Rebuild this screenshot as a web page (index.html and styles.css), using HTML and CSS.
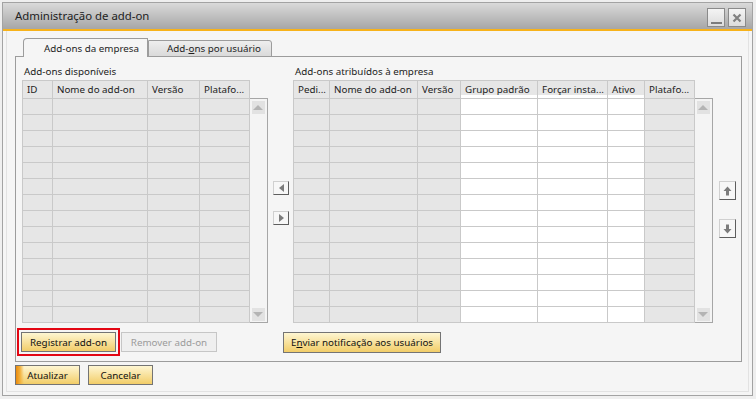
FILE: index.html
```html
<!DOCTYPE html>
<html lang="pt">
  <head>
    <meta charset="UTF-8" />
    <meta name="viewport" content="width=device-width, initial-scale=1.0" />
    <title>Administração de add-on</title>
    <link rel="stylesheet" href="styles.css">
  </head>
  <body>
    <div class="window">
      <div class="titlebar">
        <span class="title">Administração de add-on</span>
        <div class="win-buttons">
          <span class="win-btn"><span class="min-bar"></span></span>
          <span class="win-btn">
            <svg width="10" height="10" viewBox="0 0 10 10">
              <path d="M1.5 1.5 L8.5 8.5 M8.5 1.5 L1.5 8.5" stroke="#808080" stroke-width="2.2" fill="none" />
            </svg>
          </span>
        </div>
      </div>

      <div class="frame">
        <div class="tabs">
          <div class="tab active">Add-ons da empresa</div>
          <div class="tab">Add-<u>o</u>ns por usuário</div>
        </div>

        <div class="panel">
          <div class="lists">
            <div class="group">
              <div class="group-label">Add-ons disponíveis</div>
              <div class="grid-wrap">
                <div class="grid grid-available" id="availableGrid">
                  <div class="head">ID</div>
                  <div class="head">Nome do add-on</div>
                  <div class="head">Versão</div>
                  <div class="head">Platafo...</div>
                </div>
                <div class="scrollbar">
                  <span class="scroll-arrow up"></span>
                  <span class="scroll-arrow down"></span>
                </div>
              </div>
            </div>

            <div class="move-col">
              <button class="move-btn"><span class="tri-left"></span></button>
              <button class="move-btn"><span class="tri-right"></span></button>
            </div>

            <div class="group">
              <div class="group-label">Add-ons atribuídos à empresa</div>
              <div class="grid-wrap">
                <div class="grid grid-assigned" id="assignedGrid">
                  <div class="head">Pedi...</div>
                  <div class="head">Nome do add-on</div>
                  <div class="head">Versão</div>
                  <div class="head edit">Grupo padrão</div>
                  <div class="head edit">Forçar insta...</div>
                  <div class="head edit">Ativo</div>
                  <div class="head">Platafo...</div>
                </div>
                <div class="scrollbar">
                  <span class="scroll-arrow up"></span>
                  <span class="scroll-arrow down"></span>
                </div>
              </div>
            </div>

            <div class="order-col">
              <button class="order-btn">
                <svg width="9" height="10" viewBox="0 0 9 10"><path d="M4.5 0.5 L8.5 5 H6 V9.5 H3 V5 H0.5 Z" fill="#7c7c7c" /></svg>
              </button>
              <button class="order-btn">
                <svg width="9" height="10" viewBox="0 0 9 10"><path d="M4.5 9.5 L8.5 5 H6 V0.5 H3 V5 H0.5 Z" fill="#7c7c7c" /></svg>
              </button>
            </div>
          </div>

          <div class="actions">
            <button class="btn btn-register focused">Registrar add-on</button>
            <button class="btn btn-remove" disabled>Remover add-on</button>
            <button class="btn btn-notify">E<u>n</u>viar notificação aos usuários</button>
          </div>
        </div>

        <div class="footer">
          <button class="btn btn-default">Atualizar</button>
          <button class="btn">Cancelar</button>
        </div>
      </div>
    </div>

    <script>
      // Fill both grids with empty rows
      function fillRows(gridId, columns, editable) {
        const grid = document.getElementById(gridId);
        for (let r = 0; r < 14; r++) {
          for (let c = 0; c < columns; c++) {
            const cell = document.createElement('div');
            cell.className = editable.includes(c) ? 'cell edit' : 'cell';
            grid.appendChild(cell);
          }
        }
      }

      fillRows('availableGrid', 4, []);
      fillRows('assignedGrid', 7, [3, 4, 5]);
    </script>
  </body>
</html>
```

FILE: styles.css
```css
body {
  margin: 2px 0 0 2px;
  background-color: #efefef;
  font-family: "Noto Sans", "Open Sans", sans-serif;
  font-size: 9.8px;
  color: #1e1e1e;
}
button {
  font-family: inherit;
  font-size: inherit;
  color: inherit;
  padding: 0;
}
.window {
  width: 749px;
  height: 392px;
  border: 1px solid #a3a3a3;
  background-color: #f5f5f5;
  display: flex;
  flex-direction: column;
}
.titlebar {
  height: 26px;
  flex: none;
  display: flex;
  justify-content: space-between;
  align-items: flex-start;
  padding: 0 6px 0 12px;
  background: linear-gradient(#dadada, #a6a6a6);
  border-bottom: 2px solid #f7b21a;
}
.title {
  font-size: 11.4px;
  line-height: 26px;
  color: #222;
}
.win-buttons {
  display: flex;
  gap: 3px;
  padding-top: 5px;
}
.win-btn {
  width: 16px;
  height: 17px;
  border: 1px solid #8a8a8a;
  background: linear-gradient(#f4f4f4, #dcdcdc);
  display: flex;
  align-items: center;
  justify-content: center;
}
.min-bar {
  width: 11px;
  height: 2px;
  background-color: #7c7c7c;
  margin-top: 10px;
}
.frame {
  flex: 1;
  margin: 0 3px 3px 3px;
  border: 1px solid #e2e2e2;
  border-top: none;
  padding: 7px 6px 0 8px;
  display: flex;
  flex-direction: column;
}
.tabs {
  display: flex;
  align-items: flex-end;
  padding-left: 8px;
  margin-bottom: -1px;
  position: relative;
  z-index: 1;
}
.tab {
  height: 15px;
  line-height: 15px;
  padding-left: 18px;
  width: 104px;
  border: 1px solid #9c9c9c;
  border-top-right-radius: 3px;
  background: linear-gradient(#eeeeee, #dadada);
}
.tab.active {
  height: 18px;
  line-height: 19px;
  width: 103px;
  padding-left: 20px;
  border-bottom: none;
  border-radius: 4px 0 0 0;
  background: #f5f5f5;
}
.panel {
  border: 1px solid #9c9c9c;
  padding: 7px 0 8px 6px;
}
.lists {
  display: flex;
}
.group-label {
  height: 16px;
  line-height: 15px;
  padding-left: 2px;
  color: #222;
}
.grid-wrap {
  display: flex;
  align-items: flex-start;
}
.grid {
  display: grid;
  grid-template-rows: 17px;
  grid-auto-rows: 15px;
  gap: 1px;
  padding: 1px;
  background-color: #c9c9c9;
}
.grid-available {
  grid-template-columns: 29px 94px 51px 49px;
}
.grid-assigned {
  grid-template-columns: 35px 87px 42px 76px 69px 36px 49px;
}
.head {
  background-color: #e6e6e6;
  padding-left: 4px;
  line-height: 17px;
  white-space: nowrap;
  overflow: hidden;
  color: #222;
}
.head.edit {
  box-shadow: inset 0 -3px 0 #ffffff;
}
.cell {
  background-color: #e6e6e6;
}
.cell.edit {
  background-color: #ffffff;
}
.scrollbar {
  width: 16px;
  height: 220px;
  margin-top: 18px;
  border: 1px solid #a6a6a6;
  border-left: none;
  padding: 2px 1px 1px 0;
  display: flex;
  flex-direction: column;
  justify-content: space-between;
  align-items: center;
  background-color: #f4f4f4;
}
.scroll-arrow {
  width: 13px;
  height: 13px;
  background-color: #e2e2e2;
  display: flex;
  align-items: center;
  justify-content: center;
}
.scroll-arrow::before {
  content: "";
  border-left: 5px solid transparent;
  border-right: 5px solid transparent;
}
.scroll-arrow.up::before {
  border-bottom: 5px solid #b4b4b4;
}
.scroll-arrow.down::before {
  border-top: 5px solid #b4b4b4;
}
.move-col {
  width: 26px;
  display: flex;
  flex-direction: column;
  align-items: flex-start;
  gap: 16px;
  padding: 117px 0 0 5px;
  box-sizing: border-box;
}
.move-btn {
  width: 16px;
  height: 14px;
  background-color: #f7f7f7;
  border: 1px solid #d0d0d0;
  border-right-color: #5e5e5e;
  border-bottom-color: #5e5e5e;
  display: flex;
  align-items: center;
  justify-content: center;
}
.tri-left {
  border-top: 4px solid transparent;
  border-bottom: 4px solid transparent;
  border-right: 5px solid #7c7c7c;
}
.tri-right {
  border-top: 4px solid transparent;
  border-bottom: 4px solid transparent;
  border-left: 5px solid #7c7c7c;
}
.order-col {
  width: 29px;
  display: flex;
  flex-direction: column;
  align-items: flex-start;
  gap: 19px;
  padding: 117px 0 0 6px;
  box-sizing: border-box;
}
.order-btn {
  width: 17px;
  height: 19px;
  background-color: #f7f7f7;
  border: 1px solid #d0d0d0;
  border-right-color: #5e5e5e;
  border-bottom-color: #5e5e5e;
  display: flex;
  align-items: center;
  justify-content: center;
}
.actions {
  display: flex;
  align-items: flex-start;
  margin-top: 9px;
  margin-left: -1px;
  gap: 5px;
}
.btn {
  height: 20px;
  border: 1px solid #747474;
  background: linear-gradient(#fef6d2, #f2cd68);
  color: #111;
}
.btn-register {
  width: 95px;
}
.btn.focused {
  outline: 2px solid #e30613;
  outline-offset: 2px;
}
.btn-remove {
  width: 96px;
  border-color: #c6c6c6;
  background: #efefef;
  color: #9b9b9b;
}
.btn-notify {
  width: 158px;
  height: 21px;
  margin-left: 61px;
}
.footer {
  display: flex;
  gap: 8px;
  margin-top: 3px;
}
.btn-default,
.footer .btn {
  width: 65px;
}
.btn-default {
  background:
    linear-gradient(to right, #ea8a0e 0, #f2b13d 4px, rgba(242, 205, 104, 0) 8px),
    linear-gradient(#fef6d2, #f2cd68);
}
```
